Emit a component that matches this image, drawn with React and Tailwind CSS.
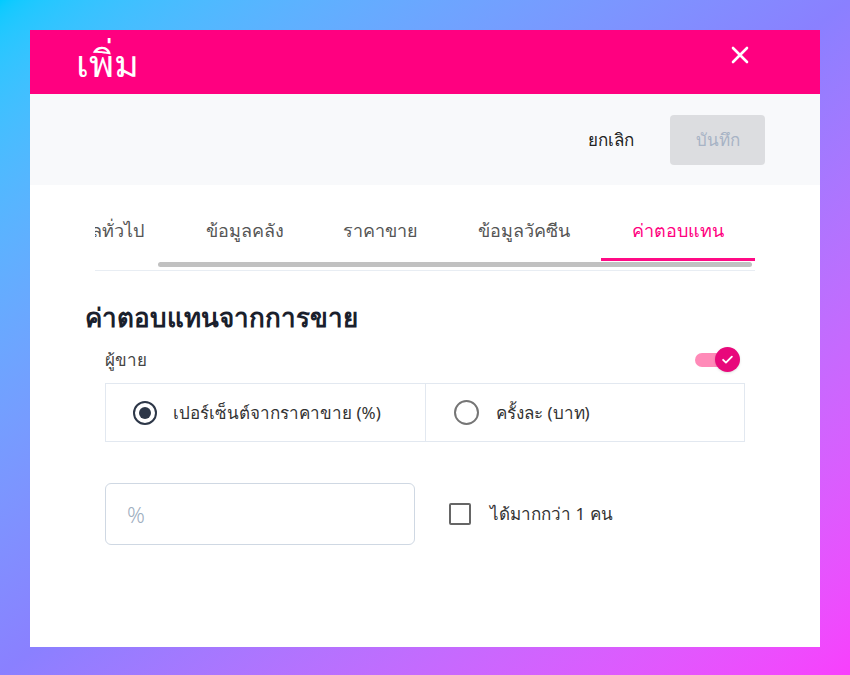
import React from "react";

function Check({ className }) {
  return (
    <svg viewBox="0 0 24 24" className={className} fill="none" stroke="currentColor" strokeWidth="3" strokeLinecap="round" strokeLinejoin="round">
      <path d="M5 12.5l4.5 4.5L19 7.5" />
    </svg>
  );
}

const tabs = [
  { label: "ข้อมูลทั่วไป", w: "w-[155px]" },
  { label: "ข้อมูลคลัง", w: "w-[136px]" },
  { label: "ราคาขาย", w: "w-[134px]" },
  { label: "ข้อมูลวัคซีน", w: "w-[154px]" },
];

export default function App() {
  return (
    <div
      className="w-[850px] h-[675px] bg-gradient-to-br from-[#00cbff] via-[#8a80ff] to-[#f83ffd] p-[30px] overflow-hidden"
      style={{ fontFamily: '"Noto Sans", "Liberation Sans", sans-serif' }}
    >
      <div className="w-[790px] h-[617px] bg-white flex flex-col">
        <div className="h-[64px] bg-[#ff0080] flex items-center justify-between pl-[46px] pr-[68px]">
          <div className="text-white text-[38px] leading-none">เพิ่ม</div>
          <svg viewBox="0 0 24 24" className="w-[24px] h-[24px] text-white -mt-[14px]" fill="none" stroke="currentColor" strokeWidth="2.6" strokeLinecap="round">
            <path d="M5 5l14 14M19 5L5 19" />
          </svg>
        </div>
        <div className="h-[91px] bg-[#f8f9fb] flex items-center justify-end pr-[55px] gap-[36px]">
          <span className="text-[17px] text-[#222]">ยกเลิก</span>
          <div className="w-[95px] h-[50px] rounded-[4px] bg-[#dcdde0] flex items-center justify-center text-[17px] text-[#a7b3c5]">บันทึก</div>
        </div>
        <div className="pt-[18px] pl-[65px] w-[725px]">
          <div className="relative overflow-hidden w-[660px] border-b border-[#e8edf3] h-[68px]">
            <div className="flex -ml-[73px] h-[54px] items-center">
              {tabs.map((t) => (
                <div key={t.label} className={`${t.w} shrink-0 text-center text-[18px] text-[#555]`}>{t.label}</div>
              ))}
              <div className="w-[154px] shrink-0 text-center text-[18px] text-[#ff0080]">ค่าตอบแทน</div>
            </div>
            <div className="absolute left-[506px] w-[154px] top-[55px] h-[3px] bg-[#ff0a85]" />
            <div className="absolute left-[63px] w-[594px] top-[59px] h-[5px] rounded-full bg-[#c1c1c1]" />
          </div>
        </div>
        <div className="pl-[55px] pt-[29px] pr-[75px]">
          <div className="text-[26px] font-bold text-[#1a202c] leading-[34px]">ค่าตอบแทนจากการขาย</div>
          <div className="pl-[20px] mt-[13px] h-[25px] flex items-center justify-between">
            <span className="text-[17px] text-[#444]">ผู้ขาย</span>
            <div className="flex items-center mr-[5px]">
              <div className="w-[30px] h-[14px] rounded-full bg-[#ff8ab8] -mr-[10px]" />
              <div className="w-[25px] h-[25px] rounded-full bg-[#e8087b] flex items-center justify-center text-white shadow">
                <Check className="w-[15px] h-[15px]" />
              </div>
            </div>
          </div>
          <div className="ml-[20px] mt-[11px] w-[640px] h-[59px] border border-[#e2e8f0] flex">
            <div className="w-[320px] border-r border-[#e2e8f0] flex items-center pl-[27px] gap-[16px]">
              <div className="w-[24px] h-[24px] rounded-full border-[2.5px] border-[#2d3748] flex items-center justify-center">
                <div className="w-[12px] h-[12px] rounded-full bg-[#2d3748]" />
              </div>
              <span className="text-[17px] text-[#333]">เปอร์เซ็นต์จากราคาขาย (%)</span>
            </div>
            <div className="flex-1 flex items-center pl-[28px] gap-[17px]">
              <div className="w-[25px] h-[25px] rounded-full border-2 border-[#757575]" />
              <span className="text-[17px] text-[#333]">ครั้งละ (บาท)</span>
            </div>
          </div>
          <div className="ml-[20px] mt-[41px] flex items-center">
            <div className="w-[310px] h-[62px] rounded-[6px] border border-[#cfd8e3] flex items-center pl-[21px] text-[22px] font-light text-[#a0aec0]">%</div>
            <div className="ml-[34px] w-[22px] h-[22px] rounded-[2px] border-2 border-[#666]" />
            <span className="ml-[19px] text-[17px] text-[#333]">ได้มากกว่า 1 คน</span>
          </div>
        </div>
      </div>
    </div>
  );
}
